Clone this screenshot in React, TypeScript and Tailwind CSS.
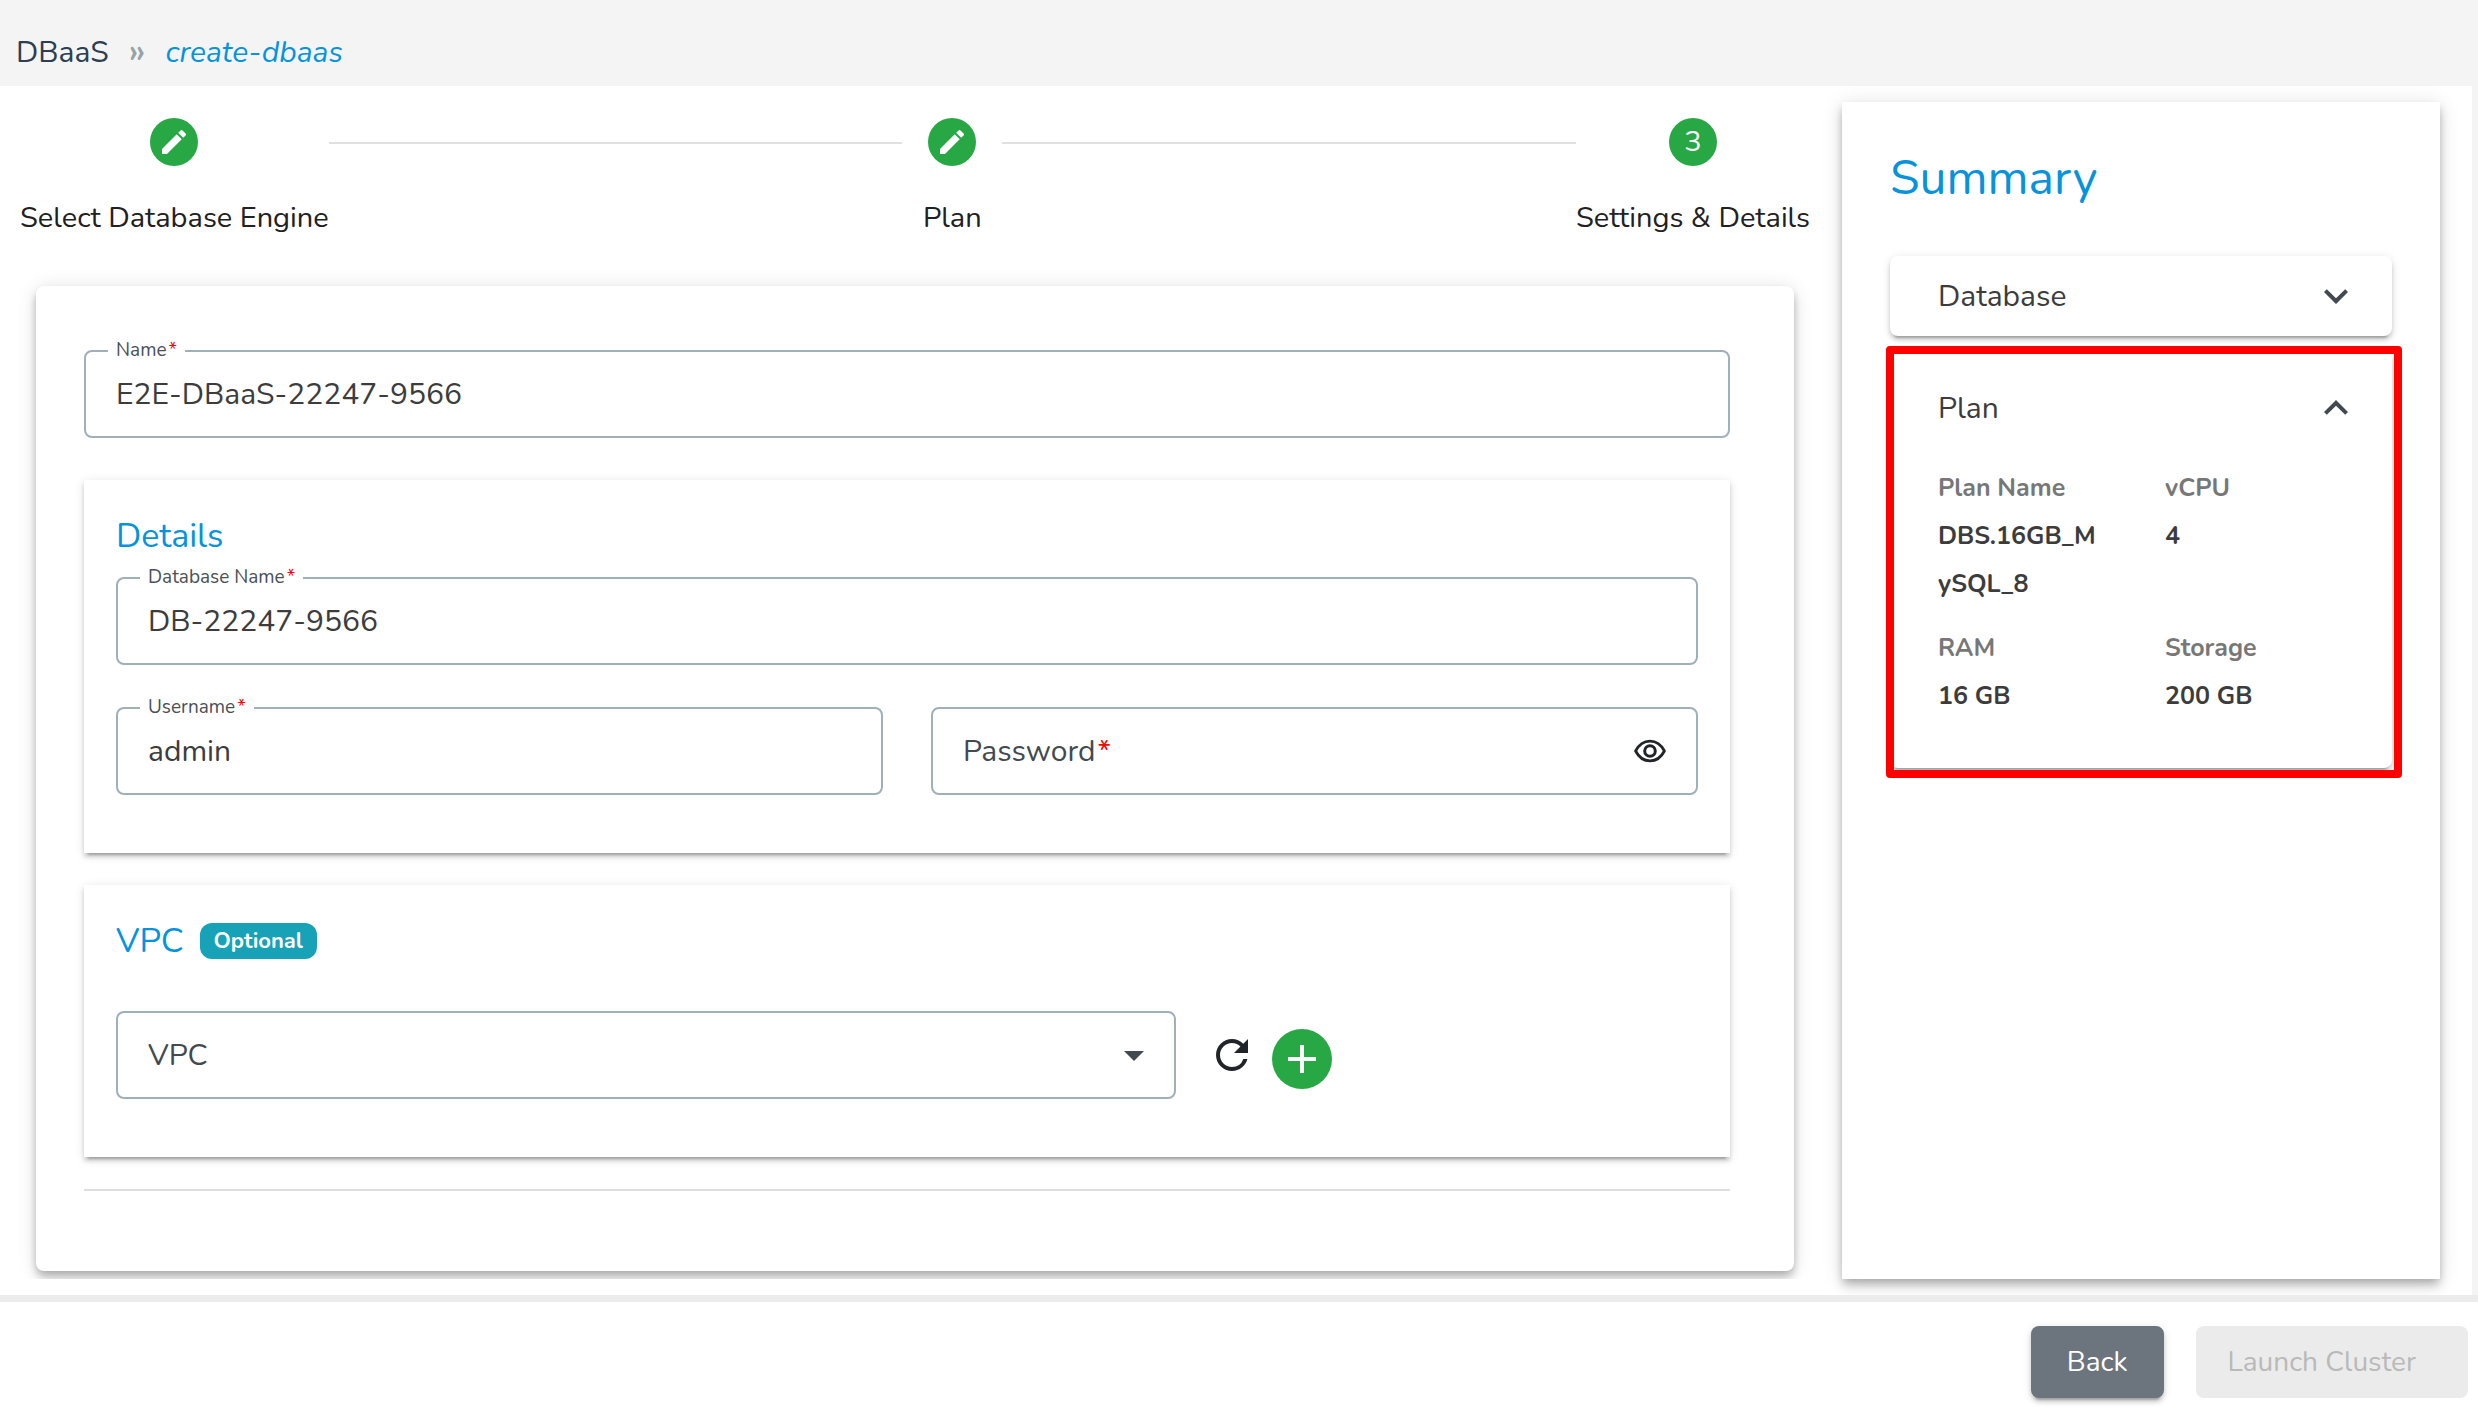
import type { ReactNode } from "react";
import { MdAdd, MdArrowDropDown, MdExpandLess, MdExpandMore, MdModeEdit, MdRefresh } from "react-icons/md";

const smallCard =
  "shadow-[0_6px_2px_-4px_rgba(0,0,0,0.2),0_4px_4px_0_rgba(0,0,0,0.14),0_2px_10px_0_rgba(0,0,0,0.12)]";
const largeCard =
  "shadow-[0_4px_8px_-2px_rgba(0,0,0,0.2),0_8px_10px_0_rgba(0,0,0,0.14),0_2px_20px_0_rgba(0,0,0,0.12)]";

function Required() {
  return <span className="ml-0.5 text-[#ff0000]">*</span>;
}

function EyeIcon() {
  return (
    <svg viewBox="0 0 32 24" className="h-6 w-8" fill="none" stroke="currentColor" aria-hidden="true">
      <path
        d="M1.6 12C4.9 5.6 10 2.1 16 2.1S27.1 5.6 30.4 12C27.1 18.4 22 21.9 16 21.9S4.9 18.4 1.6 12Z"
        strokeWidth="2.8"
        strokeLinejoin="round"
      />
      <circle cx="16" cy="12" r="5.3" strokeWidth="3" />
    </svg>
  );
}

function TextField({ id, label, value }: { id: string; label: string; value: string }) {
  return (
    <div className="relative">
      <input
        id={id}
        type="text"
        defaultValue={value}
        className="block h-22 w-full rounded-lg border-2 border-[#a0b0b9] bg-white px-[30px] text-[30px] text-[#3c3c3c] outline-none"
      />
      <label htmlFor={id} className="absolute -top-3.5 left-6 bg-white px-2 text-[19px] leading-7 text-[#495057]">
        {label}
        <Required />
      </label>
    </div>
  );
}

function PasswordField() {
  return (
    <div className="relative">
      <input
        id="password"
        type="password"
        className="block h-22 w-full rounded-lg border-2 border-[#a0b0b9] bg-white px-[30px] text-[30px] text-[#3c3c3c] outline-none"
      />
      <label htmlFor="password" className="absolute inset-y-0 left-8 flex items-center text-[30px] text-[#424a50]">
        Password
        <Required />
      </label>
      <button
        type="button"
        aria-label="Show password"
        className="absolute inset-y-0 right-8 flex items-center text-[#212529]"
      >
        <EyeIcon />
      </button>
    </div>
  );
}

function Step({ label, children }: { label: string; children: ReactNode }) {
  return (
    <li className="flex min-w-[100px] flex-col items-center gap-7">
      <span className="flex size-12 items-center justify-center rounded-full bg-[#28a745] text-[29px] text-white">
        {children}
      </span>
      <span className="text-[29px] leading-[48px] whitespace-nowrap text-[#212121]">{label}</span>
    </li>
  );
}

function StepLine() {
  return <li aria-hidden="true" className="mt-6 h-0.5 flex-1 bg-[#e0e0e0]" />;
}

function Fact({ name, value }: { name: string; value: string }) {
  return (
    <div className="pr-16">
      <dt className="text-[#777777]">{name}</dt>
      <dd className="break-all text-[#3c3c3c]">{value}</dd>
    </div>
  );
}

export default function App() {
  return (
    <div className="flex min-h-screen flex-col bg-[#f4f4f4] font-['Nunito','Open_Sans',sans-serif]">
      <nav aria-label="Breadcrumb" className="flex h-[86px] items-center pt-[18px] pl-4">
        <a href="#dbaas" className="text-[30px] text-[#2c3e50]">
          DBaaS
        </a>
        <span className="mx-5 text-[36px] leading-9 font-semibold text-[#95a5a6]">»</span>
        <a href="#create-dbaas" className="text-[30px] text-[#0693dc] italic">
          create-dbaas
        </a>
      </nav>

      <main className="mr-1.5 flex flex-1 bg-white">
        <div className="mb-4 flex-1 overflow-hidden">
          <ol className="flex pt-8 pr-8 pl-5">
            <Step label="Select Database Engine">
              <MdModeEdit className="size-8" />
            </Step>
            <StepLine />
            <Step label="Plan">
              <MdModeEdit className="size-8" />
            </Step>
            <StepLine />
            <Step label="Settings & Details">3</Step>
          </ol>

          <form className={`mt-11 mr-12 ml-9 rounded-lg bg-white pt-16 pr-16 pb-20 pl-12 ${largeCard}`}>
            <TextField id="name" label="Name" value="E2E-DBaaS-22247-9566" />

            <section className={`mt-[42px] bg-white px-8 pt-8 pb-[58px] ${smallCard}`}>
              <h2 className="mb-[17px] text-[34px] leading-[48px] text-[#0693dc]">Details</h2>
              <TextField id="database-name" label="Database Name" value="DB-22247-9566" />
              <div className="mt-[42px] grid grid-cols-2 gap-12">
                <TextField id="username" label="Username" value="admin" />
                <PasswordField />
              </div>
            </section>

            <section className={`mt-8 bg-white px-8 pt-8 pb-[58px] ${smallCard}`}>
              <div className="mb-[46px] flex items-center gap-4">
                <h2 className="text-[34px] leading-[48px] text-[#0693dc]">VPC</h2>
                <span className="rounded-xl bg-[#17a2b8] px-3.5 text-[22px] leading-9 font-bold text-white">
                  Optional
                </span>
              </div>
              <div className="flex items-center">
                <div className="relative w-[67%]">
                  <select
                    aria-label="VPC"
                    className="block h-22 w-full appearance-none rounded-lg border-2 border-[#a0b0b9] bg-white px-[30px] text-[30px] text-[#424a50] outline-none"
                  >
                    <option>VPC</option>
                  </select>
                  <MdArrowDropDown className="pointer-events-none absolute top-5 right-[18px] size-12 text-[#424a50]" />
                </div>
                <button type="button" aria-label="Refresh" className="ml-8 text-[#212529]">
                  <MdRefresh className="size-12" />
                </button>
                <button
                  type="button"
                  aria-label="Add VPC"
                  className="mt-2 ml-4 flex size-15 items-center justify-center rounded-full bg-[#28a745] text-white"
                >
                  <MdAdd className="size-12" />
                </button>
              </div>
            </section>

            <hr className="mt-8 border-t-2 border-[#dfdfdf]" />
          </form>
        </div>

        <aside className={`mt-4 mr-8 mb-4 w-[598px] shrink-0 bg-white px-12 pt-11 ${largeCard}`}>
          <h1 className="mb-[46px] text-[48px] leading-[64px] text-[#0693dc]">Summary</h1>

          <section className={`rounded-lg bg-white ${smallCard}`}>
            <button
              type="button"
              aria-expanded="false"
              className="flex h-20 w-full items-center justify-between pr-8 pl-12 text-[30px] text-[#3c3c3c]"
            >
              Database
              <MdExpandMore className="size-12 text-[#424a50]" />
            </button>
          </section>

          <section className={`relative mt-4 rounded-lg bg-white pb-12 ${smallCard}`}>
            <button
              type="button"
              aria-expanded="true"
              className="flex h-28 w-full items-center justify-between pr-8 pl-12 text-[30px] text-[#3c3c3c]"
            >
              Plan
              <MdExpandLess className="size-12 text-[#424a50]" />
            </button>
            <dl className="grid grid-cols-2 gap-y-4 pl-12 text-[25px] leading-[48px] font-bold">
              <Fact name="Plan Name" value="DBS.16GB_MySQL_8" />
              <Fact name="vCPU" value="4" />
              <Fact name="RAM" value="16 GB" />
              <Fact name="Storage" value="200 GB" />
            </dl>
            <div className="pointer-events-none absolute -top-1.5 -right-2.5 -bottom-2.5 -left-1 rounded border-8 border-[#ff0000]" />
          </section>
        </aside>
      </main>

      <footer className="flex justify-end gap-8 border-t-[7px] border-[#ececec] bg-white pt-6 pr-2.5 pb-2.5 text-[28px]">
        <button
          type="button"
          className={`h-[72px] rounded-lg bg-[#6c757d] px-9 text-white ${smallCard}`}
        >
          Back
        </button>
        <button type="submit" disabled className="h-[72px] rounded-lg bg-[#ebebeb] pr-[52px] pl-8 text-[#b9b9b9]">
          Launch Cluster
        </button>
      </footer>
    </div>
  );
}
